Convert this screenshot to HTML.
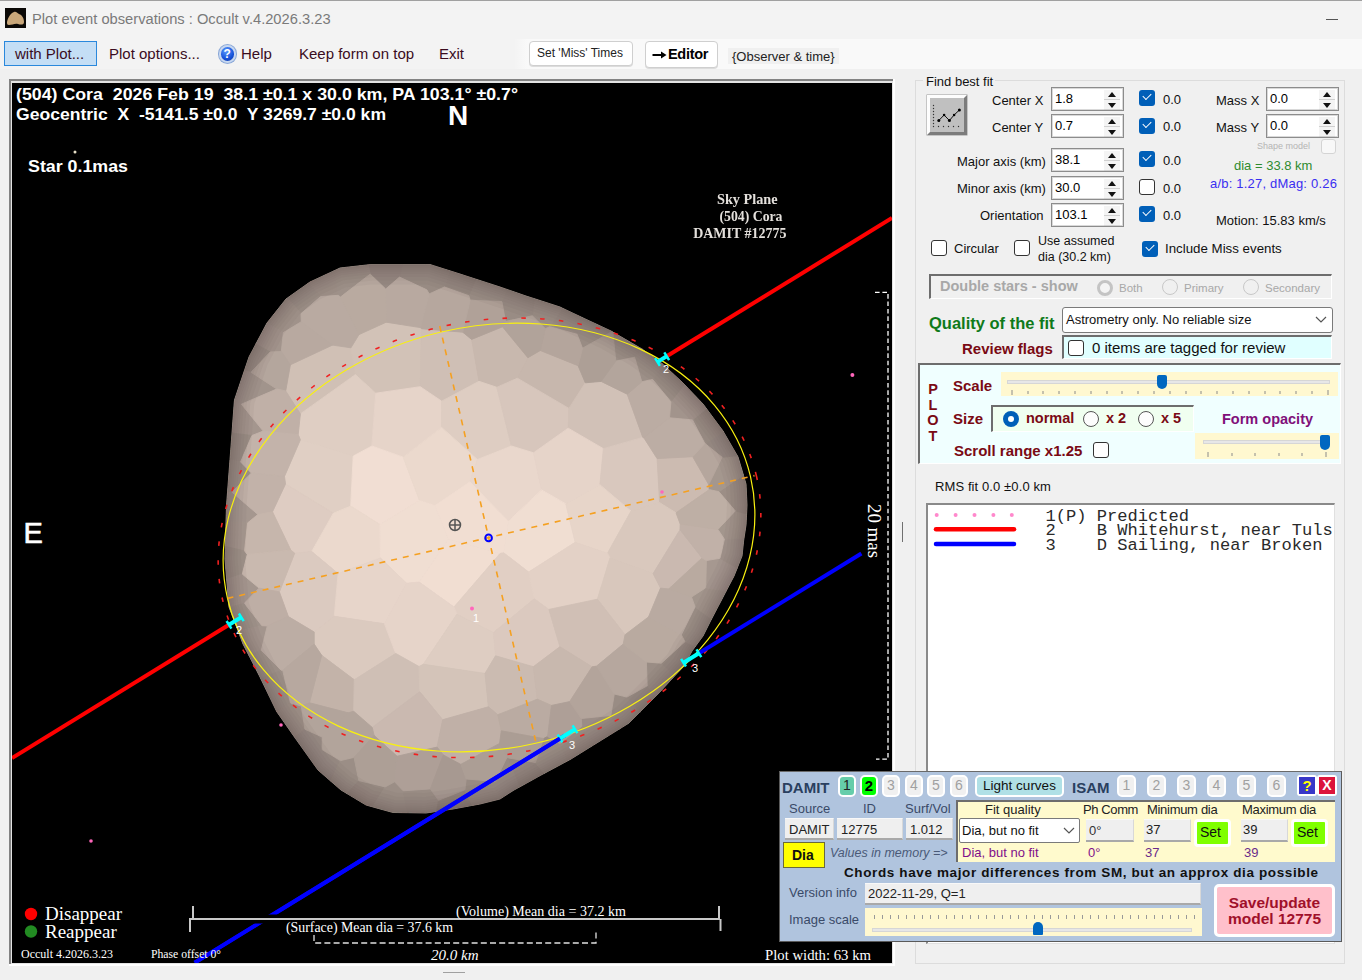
<!DOCTYPE html>
<html><head><meta charset="utf-8">
<style>
*{margin:0;padding:0;box-sizing:border-box}
html,body{width:1362px;height:980px;overflow:hidden;background:#f0f0f0;font-family:"Liberation Sans",sans-serif;color:#000;position:relative}
.a{position:absolute;white-space:nowrap}
#title{position:absolute;left:0;top:0;width:1362px;height:39px;background:#f3f3f3;border-top:1px solid #a0a0a0}
#menu{position:absolute;left:0;top:39px;width:1362px;height:30px;background:linear-gradient(90deg,#f3f3f3 0,#f3f3f3 514px,#f9f9f9 527px,#f9f9f9 100%)}
.mi{position:absolute;top:46px;font-size:15px;color:#3a0c1e;line-height:16px}
.t13{font-size:13px;line-height:15px}
</style></head><body>
<div id="title"></div>
<svg width="21" height="20" style="position:absolute;left:5px;top:8px"><rect width="21" height="20" fill="#0a0806"/><path d="M2 14 C3 9 6 5 9 4 C11 3 12 5 14 6 C17 7 19 10 19 14 C19 17 16 17 13 16 C10 15 7 17 4 17 C2 17 2 16 2 14Z" fill="#c9a77a"/></svg>
<div class="a" style="left:32px;top:10px;font-size:14.7px;color:#7a7a7a;line-height:18px">Plot event observations : Occult v.4.2026.3.23</div>
<div class="a" style="left:1326px;top:19px;width:12px;height:1px;background:#555"></div>
<div id="menu"></div>
<div class="a" style="left:4px;top:41px;width:93px;height:25px;background:#c4def5;border:1px solid #2a88dc"></div>
<div class="mi" style="left:15px">with Plot...</div>
<div class="mi" style="left:109px">Plot options...</div>
<div class="mi" style="left:241px">Help</div>
<div class="mi" style="left:299px">Keep form on top</div>
<div class="mi" style="left:439px">Exit</div>
<svg width="1362" height="980" viewBox="0 0 1362 980" style="position:absolute;left:0;top:0">
<defs><clipPath id="pc"><rect x="12" y="83" width="880" height="880"/></clipPath></defs>
<rect x="9" y="79" width="886" height="887" fill="#ffffff"/>
<rect x="9" y="79" width="884" height="885" fill="#828282"/>
<rect x="11" y="81" width="882" height="883" fill="#e3e3e3"/>
<rect x="12" y="83" width="880" height="880" fill="#000"/>
<g clip-path="url(#pc)">
<polygon points="340.0,268.0 371.0,264.5 430.0,264.5 460.0,274.0 500.0,287.0 526.0,296.0 560.0,307.0 580.0,316.5 611.0,331.0 642.0,349.0 662.0,363.5 682.0,382.0 703.0,404.0 723.0,431.0 738.0,457.0 746.0,484.0 747.0,505.0 746.0,525.0 743.7,540.0 742.0,556.0 734.0,576.0 722.0,599.0 711.0,620.0 703.0,636.0 692.0,651.0 684.0,666.0 670.0,681.0 658.0,694.0 629.0,723.0 600.0,741.0 571.0,759.0 543.0,774.0 514.0,790.0 500.0,799.0 480.0,804.0 453.0,809.0 426.0,813.0 393.0,812.5 366.0,805.0 341.0,790.0 318.0,770.0 298.0,742.0 277.0,712.0 260.0,677.0 243.0,644.0 234.0,620.0 229.0,607.0 225.0,559.0 226.5,506.0 230.5,453.0 234.5,400.0 249.0,357.0 267.0,323.0 286.0,299.0 310.0,282.0" fill="#b4a69c"/>
<polygon points="285.7,390.9 300.4,413.9 355.4,374.6 350.9,347.8 332.5,345.1 290.4,364.8" fill="#d0c0b5" stroke="#d0c0b5" stroke-width="0.9" stroke-linejoin="round"/>
<polygon points="386.2,322.2 359.0,334.6 350.9,347.8 355.4,374.6 375.8,393.2 420.2,386.7 421.4,328.7 420.3,327.6" fill="#d2c2b7" stroke="#d2c2b7" stroke-width="0.9" stroke-linejoin="round"/>
<polygon points="471.6,339.4 462.8,332.2 421.4,328.7 420.2,386.7 441.7,401.2 479.0,381.3" fill="#cfbfb5" stroke="#cfbfb5" stroke-width="0.9" stroke-linejoin="round"/>
<polygon points="502.5,326.8 471.6,339.4 479.0,381.3 496.8,387.3 517.4,378.2 527.9,357.7" fill="#c8b8ae" stroke="#c8b8ae" stroke-width="0.9" stroke-linejoin="round"/>
<polygon points="517.4,378.2 568.9,408.4 585.3,382.8 578.1,365.7 540.3,350.5 527.9,357.7" fill="#c7b7ad" stroke="#c7b7ad" stroke-width="0.9" stroke-linejoin="round"/>
<polygon points="300.4,413.9 298.2,434.6 300.4,439.8 353.2,456.1 371.9,446.0 375.8,393.2 355.4,374.6" fill="#dfcec3" stroke="#dfcec3" stroke-width="0.9" stroke-linejoin="round"/>
<polygon points="403.2,457.2 441.6,427.4 441.7,401.2 420.2,386.7 375.8,393.2 371.9,446.0" fill="#e6d4c9" stroke="#e6d4c9" stroke-width="0.9" stroke-linejoin="round"/>
<polygon points="496.8,387.3 479.0,381.3 441.7,401.2 441.6,427.4 477.4,459.5 511.4,446.0" fill="#decdc2" stroke="#decdc2" stroke-width="0.9" stroke-linejoin="round"/>
<polygon points="496.8,387.3 511.4,446.0 533.5,452.8 568.2,428.2 568.9,408.4 517.4,378.2" fill="#d7c6bc" stroke="#d7c6bc" stroke-width="0.9" stroke-linejoin="round"/>
<polygon points="601.1,381.4 585.3,382.8 568.9,408.4 568.2,428.2 603.4,448.7 642.8,437.4 627.2,394.2" fill="#d1c1b7" stroke="#d1c1b7" stroke-width="0.9" stroke-linejoin="round"/>
<polygon points="333.4,513.2 350.7,506.1 353.2,456.1 300.4,439.8 284.5,476.4 285.5,484.0" fill="#e0cfc4" stroke="#e0cfc4" stroke-width="0.9" stroke-linejoin="round"/>
<polygon points="403.2,457.2 371.9,446.0 353.2,456.1 350.7,506.1 380.0,524.5 419.5,500.6" fill="#f1ded3" stroke="#f1ded3" stroke-width="0.9" stroke-linejoin="round"/>
<polygon points="441.6,427.4 403.2,457.2 419.5,500.6 434.8,505.6 469.8,481.8 477.4,459.5" fill="#ebd9cd" stroke="#ebd9cd" stroke-width="0.9" stroke-linejoin="round"/>
<polygon points="511.4,446.0 477.4,459.5 469.8,481.8 508.5,521.1 541.5,489.9 533.5,452.8" fill="#e9d7cc" stroke="#e9d7cc" stroke-width="0.9" stroke-linejoin="round"/>
<polygon points="541.5,489.9 565.8,503.9 599.9,484.7 603.4,448.7 568.2,428.2 533.5,452.8" fill="#e6d4c9" stroke="#e6d4c9" stroke-width="0.9" stroke-linejoin="round"/>
<polygon points="643.8,437.7 642.8,437.4 603.4,448.7 599.9,484.7 631.0,511.1 659.6,502.6 657.1,458.6" fill="#d9c8be" stroke="#d9c8be" stroke-width="0.9" stroke-linejoin="round"/>
<polygon points="708.7,484.6 692.7,456.7 657.1,458.6 659.6,502.6 676.0,512.8 709.3,489.6" fill="#ccbbb1" stroke="#ccbbb1" stroke-width="0.9" stroke-linejoin="round"/>
<polygon points="290.8,550.0 294.7,553.2 311.7,551.5 333.4,513.2 285.5,484.0 272.5,511.8" fill="#deccc2" stroke="#deccc2" stroke-width="0.9" stroke-linejoin="round"/>
<polygon points="380.5,557.9 380.0,524.5 350.7,506.1 333.4,513.2 311.7,551.5 338.1,573.5" fill="#ebd9cd" stroke="#ebd9cd" stroke-width="0.9" stroke-linejoin="round"/>
<polygon points="419.2,582.1 448.4,538.9 434.8,505.6 419.5,500.6 380.0,524.5 380.5,557.9 406.5,583.3" fill="#f0ded2" stroke="#f0ded2" stroke-width="0.9" stroke-linejoin="round"/>
<polygon points="508.5,521.1 469.8,481.8 434.8,505.6 448.4,538.9 500.1,553.4 503.7,552.8" fill="#f1ded2" stroke="#f1ded2" stroke-width="0.9" stroke-linejoin="round"/>
<polygon points="528.6,572.0 575.2,542.3 565.8,503.9 541.5,489.9 508.5,521.1 503.7,552.8" fill="#f0ded2" stroke="#f0ded2" stroke-width="0.9" stroke-linejoin="round"/>
<polygon points="607.5,553.2 631.0,511.1 599.9,484.7 565.8,503.9 575.2,542.3" fill="#e7d5c9" stroke="#e7d5c9" stroke-width="0.9" stroke-linejoin="round"/>
<polygon points="659.6,502.6 631.0,511.1 607.5,553.2 610.0,558.0 653.1,573.6 680.0,529.7 680.2,524.1 676.0,512.8" fill="#d9c8bd" stroke="#d9c8bd" stroke-width="0.9" stroke-linejoin="round"/>
<polygon points="288.4,616.6 314.2,632.0 334.3,616.3 338.1,573.5 311.7,551.5 294.7,553.2 279.4,591.9" fill="#dbcac0" stroke="#dbcac0" stroke-width="0.9" stroke-linejoin="round"/>
<polygon points="384.5,623.8 406.5,583.3 380.5,557.9 338.1,573.5 334.3,616.3" fill="#e7d5ca" stroke="#e7d5ca" stroke-width="0.9" stroke-linejoin="round"/>
<polygon points="448.4,538.9 419.2,582.1 454.0,607.0 500.1,553.4" fill="#f1ded2" stroke="#f1ded2" stroke-width="0.9" stroke-linejoin="round"/>
<polygon points="528.6,572.0 503.7,552.8 500.1,553.4 454.0,607.0 456.9,614.2 493.4,632.6 534.3,598.8" fill="#e1cfc4" stroke="#e1cfc4" stroke-width="0.9" stroke-linejoin="round"/>
<polygon points="597.4,599.2 610.0,558.0 607.5,553.2 575.2,542.3 528.6,572.0 534.3,598.8 548.9,609.4" fill="#e3d1c6" stroke="#e3d1c6" stroke-width="0.9" stroke-linejoin="round"/>
<polygon points="653.1,573.6 610.0,558.0 597.4,599.2 625.1,634.7 648.5,616.9 660.5,588.1" fill="#d8c7bc" stroke="#d8c7bc" stroke-width="0.9" stroke-linejoin="round"/>
<polygon points="680.0,529.7 653.1,573.6 660.5,588.1 668.7,589.0 702.1,557.9" fill="#cab9b0" stroke="#cab9b0" stroke-width="0.9" stroke-linejoin="round"/>
<polygon points="354.3,679.8 395.7,653.4 384.5,623.8 334.3,616.3 314.2,632.0 314.2,644.1 321.7,655.3" fill="#dbcabf" stroke="#dbcabf" stroke-width="0.9" stroke-linejoin="round"/>
<polygon points="456.9,614.2 454.0,607.0 419.2,582.1 406.5,583.3 384.5,623.8 395.7,653.4 419.0,666.5 423.3,664.3" fill="#e6d4c9" stroke="#e6d4c9" stroke-width="0.9" stroke-linejoin="round"/>
<polygon points="456.9,614.2 423.3,664.3 485.0,673.4 495.5,655.8 493.4,632.6" fill="#decdc2" stroke="#decdc2" stroke-width="0.9" stroke-linejoin="round"/>
<polygon points="534.3,598.8 493.4,632.6 495.5,655.8 533.3,666.7 559.9,646.7 548.9,609.4" fill="#dbc9bf" stroke="#dbc9bf" stroke-width="0.9" stroke-linejoin="round"/>
<polygon points="625.1,634.7 597.4,599.2 548.9,609.4 559.9,646.7 592.1,666.8 596.6,666.1 623.2,644.1" fill="#d0bfb5" stroke="#d0bfb5" stroke-width="0.9" stroke-linejoin="round"/>
<polygon points="353.7,711.3 354.3,679.8 321.7,655.3 309.5,702.8 348.1,712.8" fill="#c3b3a9" stroke="#c3b3a9" stroke-width="0.9" stroke-linejoin="round"/>
<polygon points="419.8,691.7 419.0,666.5 395.7,653.4 354.3,679.8 353.7,711.3 372.2,727.4" fill="#cfbfb5" stroke="#cfbfb5" stroke-width="0.9" stroke-linejoin="round"/>
<polygon points="488.4,706.8 485.0,673.4 423.3,664.3 419.0,666.5 419.8,691.7 442.7,719.7" fill="#d4c4b9" stroke="#d4c4b9" stroke-width="0.9" stroke-linejoin="round"/>
<polygon points="495.5,655.8 485.0,673.4 488.4,706.8 497.8,714.7 537.3,699.2 533.3,666.7" fill="#cbbbb1" stroke="#cbbbb1" stroke-width="0.9" stroke-linejoin="round"/>
<polygon points="559.9,646.7 533.3,666.7 537.3,699.2 551.5,705.4 569.7,701.6 592.1,666.8" fill="#c8b8ae" stroke="#c8b8ae" stroke-width="0.9" stroke-linejoin="round"/>
<polygon points="397.1,756.2 437.1,747.1 442.7,719.7 419.8,691.7 372.2,727.4 374.1,735.4" fill="#cab9b0" stroke="#cab9b0" stroke-width="0.9" stroke-linejoin="round"/>
<polygon points="497.8,714.7 488.4,706.8 442.7,719.7 437.1,747.1 443.3,755.0 460.8,764.4 499.6,743.4 501.3,730.8" fill="#c0b0a7" stroke="#c0b0a7" stroke-width="0.9" stroke-linejoin="round"/>
<polygon points="537.3,699.2 497.8,714.7 501.3,730.8 543.5,738.6 547.6,736.4 551.5,705.4" fill="#baaba2" stroke="#baaba2" stroke-width="0.9" stroke-linejoin="round"/>
<polygon points="320.6,296.6 338.3,295.3 334.3,270.7 310.0,282.0 308.0,283.4" fill="#9e9088" stroke="#9e9088" stroke-width="0.9" stroke-linejoin="round"/>
<polygon points="301.0,313.6 320.6,296.6 308.0,283.4 287.4,298.0" fill="#9c8f87" stroke="#9c8f87" stroke-width="0.9" stroke-linejoin="round"/>
<polygon points="301.3,321.7 301.0,313.6 287.4,298.0 286.0,299.0 267.0,323.0 267.0,323.0 283.4,332.6" fill="#a0928a" stroke="#a0928a" stroke-width="0.9" stroke-linejoin="round"/>
<polygon points="283.4,332.6 267.0,323.0 255.8,344.2 270.2,351.9 281.3,351.6" fill="#a2948c" stroke="#a2948c" stroke-width="0.9" stroke-linejoin="round"/>
<polygon points="255.8,344.2 249.0,357.0 244.3,370.9 251.0,372.2 270.2,351.9" fill="#998c84" stroke="#998c84" stroke-width="0.9" stroke-linejoin="round"/>
<polygon points="244.3,370.9 234.5,400.0 234.3,402.0 241.4,404.2 276.7,389.0 251.0,372.2" fill="#a1948c" stroke="#a1948c" stroke-width="0.9" stroke-linejoin="round"/>
<polygon points="241.4,404.2 234.3,402.0 232.0,433.0 251.9,435.5 263.2,431.1" fill="#a4968e" stroke="#a4968e" stroke-width="0.9" stroke-linejoin="round"/>
<polygon points="232.0,433.0 230.5,453.0 230.0,459.6 240.6,461.9 251.9,435.5" fill="#9b8e86" stroke="#9b8e86" stroke-width="0.9" stroke-linejoin="round"/>
<polygon points="251.4,473.1 240.6,461.9 230.0,459.6 227.5,492.5 231.9,492.1" fill="#9d9088" stroke="#9d9088" stroke-width="0.9" stroke-linejoin="round"/>
<polygon points="231.9,492.1 227.5,492.5 226.5,506.0 226.0,522.1 247.7,522.8 257.9,514.5" fill="#a5978f" stroke="#a5978f" stroke-width="0.9" stroke-linejoin="round"/>
<polygon points="247.7,522.8 226.0,522.1 225.4,546.4 244.5,550.8" fill="#a6988f" stroke="#a6988f" stroke-width="0.9" stroke-linejoin="round"/>
<polygon points="244.5,550.8 225.4,546.4 225.0,559.0 226.7,579.5 242.3,574.1 247.3,554.5" fill="#9e9189" stroke="#9e9189" stroke-width="0.9" stroke-linejoin="round"/>
<polygon points="244.4,603.2 259.1,588.1 242.3,574.1 226.7,579.5 229.0,607.0 229.2,607.6" fill="#a4968e" stroke="#a4968e" stroke-width="0.9" stroke-linejoin="round"/>
<polygon points="261.9,625.7 244.4,603.2 229.2,607.6 234.0,620.0 238.1,631.0" fill="#9f928a" stroke="#9f928a" stroke-width="0.9" stroke-linejoin="round"/>
<polygon points="261.3,650.3 267.3,625.9 261.9,625.7 238.1,631.0 243.0,644.0 248.8,655.2" fill="#a3958d" stroke="#a3958d" stroke-width="0.9" stroke-linejoin="round"/>
<polygon points="248.8,655.2 260.0,677.0 260.7,678.5 281.3,670.3 261.3,650.3" fill="#9f928a" stroke="#9f928a" stroke-width="0.9" stroke-linejoin="round"/>
<polygon points="282.7,670.3 281.3,670.3 260.7,678.5 276.6,711.3 290.5,703.0" fill="#9c8f87" stroke="#9c8f87" stroke-width="0.9" stroke-linejoin="round"/>
<polygon points="301.3,706.0 290.5,703.0 276.6,711.3 277.0,712.0 294.8,737.5 304.9,729.2" fill="#9d8f87" stroke="#9d8f87" stroke-width="0.9" stroke-linejoin="round"/>
<polygon points="304.9,729.2 294.8,737.5 298.0,742.0 310.2,759.1 322.2,749.7 322.3,737.1" fill="#988b84" stroke="#988b84" stroke-width="0.9" stroke-linejoin="round"/>
<polygon points="322.2,749.7 310.2,759.1 318.0,770.0 330.7,781.1 340.5,760.6" fill="#988b84" stroke="#988b84" stroke-width="0.9" stroke-linejoin="round"/>
<polygon points="330.7,781.1 341.0,790.0 347.2,793.7 358.8,780.6 354.0,757.4 340.5,760.6" fill="#9b8e86" stroke="#9b8e86" stroke-width="0.9" stroke-linejoin="round"/>
<polygon points="347.2,793.7 366.0,805.0 372.7,806.9 385.2,786.9 358.8,780.6" fill="#968981" stroke="#968981" stroke-width="0.9" stroke-linejoin="round"/>
<polygon points="385.2,786.9 372.7,806.9 393.0,812.5 407.6,812.7 403.2,790.8 394.6,781.8" fill="#9b8e86" stroke="#9b8e86" stroke-width="0.9" stroke-linejoin="round"/>
<polygon points="430.4,788.9 403.2,790.8 407.6,812.7 426.0,813.0 436.7,811.4 438.5,800.3" fill="#998c84" stroke="#998c84" stroke-width="0.9" stroke-linejoin="round"/>
<polygon points="436.7,811.4 453.0,809.0 472.3,805.4 464.9,789.8 438.5,800.3" fill="#91857d" stroke="#91857d" stroke-width="0.9" stroke-linejoin="round"/>
<polygon points="472.3,805.4 480.0,804.0 500.0,799.0 502.0,797.7 495.2,781.4 466.2,779.0 464.9,789.8" fill="#988b83" stroke="#988b83" stroke-width="0.9" stroke-linejoin="round"/>
<polygon points="507.1,757.1 495.2,781.4 502.0,797.7 514.0,790.0 520.1,786.7 508.7,758.0" fill="#988b84" stroke="#988b84" stroke-width="0.9" stroke-linejoin="round"/>
<polygon points="520.1,786.7 543.0,774.0 544.2,773.4 535.4,762.6 508.7,758.0" fill="#958880" stroke="#958880" stroke-width="0.9" stroke-linejoin="round"/>
<polygon points="547.6,736.4 543.5,738.6 535.4,762.6 544.2,773.4 567.9,760.7 559.9,743.6" fill="#9b8e86" stroke="#9b8e86" stroke-width="0.9" stroke-linejoin="round"/>
<polygon points="559.9,743.6 567.9,760.7 571.0,759.0 593.7,744.9 581.8,726.3" fill="#9a8d85" stroke="#9a8d85" stroke-width="0.9" stroke-linejoin="round"/>
<polygon points="581.8,726.3 593.7,744.9 600.0,741.0 618.9,729.3 610.8,715.5 581.3,718.5" fill="#9b8d86" stroke="#9b8d86" stroke-width="0.9" stroke-linejoin="round"/>
<polygon points="610.8,715.5 618.9,729.3 629.0,723.0 639.7,712.3 626.9,697.1 614.3,694.0" fill="#998c84" stroke="#998c84" stroke-width="0.9" stroke-linejoin="round"/>
<polygon points="626.9,697.1 639.7,712.3 655.4,696.6 647.2,685.8" fill="#978a82" stroke="#978a82" stroke-width="0.9" stroke-linejoin="round"/>
<polygon points="655.4,696.6 658.0,694.0 670.0,681.0 674.8,675.8 661.3,663.2 646.4,662.0 647.2,685.8" fill="#9a8d85" stroke="#9a8d85" stroke-width="0.9" stroke-linejoin="round"/>
<polygon points="661.3,663.2 674.8,675.8 684.0,666.0 692.0,651.0 695.5,646.2 685.0,641.6" fill="#978a82" stroke="#978a82" stroke-width="0.9" stroke-linejoin="round"/>
<polygon points="685.0,641.6 695.5,646.2 703.0,636.0 711.0,620.0 711.5,619.1 695.1,606.9 681.3,634.9" fill="#9c8f87" stroke="#9c8f87" stroke-width="0.9" stroke-linejoin="round"/>
<polygon points="691.5,597.0 695.1,606.9 711.5,619.1 722.0,599.0 726.1,591.1 705.7,587.8" fill="#a2958c" stroke="#a2958c" stroke-width="0.9" stroke-linejoin="round"/>
<polygon points="720.0,558.3 706.4,560.5 705.7,587.8 726.1,591.1 734.0,576.0 737.2,568.0" fill="#a69890" stroke="#a69890" stroke-width="0.9" stroke-linejoin="round"/>
<polygon points="720.0,558.3 737.2,568.0 742.0,556.0 743.7,540.0 744.0,538.1 724.4,539.2" fill="#a0938b" stroke="#a0938b" stroke-width="0.9" stroke-linejoin="round"/>
<polygon points="744.0,538.1 746.0,525.0 746.6,513.9 735.3,510.9 717.9,529.4 724.4,539.2" fill="#a3968d" stroke="#a3968d" stroke-width="0.9" stroke-linejoin="round"/>
<polygon points="746.6,513.9 747.0,505.0 746.0,484.0 743.4,475.1 718.9,491.7 735.3,510.9" fill="#9c8e86" stroke="#9c8e86" stroke-width="0.9" stroke-linejoin="round"/>
<polygon points="722.1,457.3 708.7,484.6 709.3,489.6 718.9,491.7 743.4,475.1 738.0,457.0 737.3,455.7" fill="#a4978e" stroke="#a4978e" stroke-width="0.9" stroke-linejoin="round"/>
<polygon points="705.0,443.5 722.1,457.3 737.3,455.7 723.6,432.1" fill="#988b84" stroke="#988b84" stroke-width="0.9" stroke-linejoin="round"/>
<polygon points="692.5,419.9 704.8,443.5 705.0,443.5 723.6,432.1 723.0,431.0 706.4,408.6" fill="#9a8d85" stroke="#9a8d85" stroke-width="0.9" stroke-linejoin="round"/>
<polygon points="670.9,401.8 669.5,417.8 692.5,419.9 706.4,408.6 703.0,404.0 684.3,384.4" fill="#a2948c" stroke="#a2948c" stroke-width="0.9" stroke-linejoin="round"/>
<polygon points="670.9,401.8 684.3,384.4 682.0,382.0 663.5,364.9 652.6,379.4" fill="#9b8e86" stroke="#9b8e86" stroke-width="0.9" stroke-linejoin="round"/>
<polygon points="634.6,357.3 641.8,381.8 652.6,379.4 663.5,364.9 662.0,363.5 642.0,349.0 641.7,348.8" fill="#9c8f87" stroke="#9c8f87" stroke-width="0.9" stroke-linejoin="round"/>
<polygon points="615.8,361.1 634.6,357.3 641.7,348.8 612.8,332.1" fill="#9b8e86" stroke="#9b8e86" stroke-width="0.9" stroke-linejoin="round"/>
<polygon points="577.1,334.3 582.5,348.2 612.1,331.6 611.0,331.0 582.1,317.5" fill="#998c84" stroke="#998c84" stroke-width="0.9" stroke-linejoin="round"/>
<polygon points="549.7,326.7 577.1,334.3 582.1,317.5 580.0,316.5 562.4,308.2" fill="#998c84" stroke="#998c84" stroke-width="0.9" stroke-linejoin="round"/>
<polygon points="532.3,315.8 545.4,328.7 549.7,326.7 562.4,308.2 560.0,307.0 534.4,298.7" fill="#9c8f87" stroke="#9c8f87" stroke-width="0.9" stroke-linejoin="round"/>
<polygon points="532.3,315.8 534.4,298.7 526.0,296.0 506.9,289.4 501.9,301.6 505.5,321.3" fill="#998c84" stroke="#998c84" stroke-width="0.9" stroke-linejoin="round"/>
<polygon points="468.8,295.7 470.1,300.2 501.9,301.6 506.9,289.4 500.0,287.0 475.9,279.2" fill="#9b8e86" stroke="#9b8e86" stroke-width="0.9" stroke-linejoin="round"/>
<polygon points="444.4,287.0 468.8,295.7 475.9,279.2 460.0,274.0 449.5,270.7" fill="#978a82" stroke="#978a82" stroke-width="0.9" stroke-linejoin="round"/>
<polygon points="426.8,289.8 429.2,293.9 444.4,287.0 449.5,270.7 430.0,264.5 425.1,264.5" fill="#988b83" stroke="#988b83" stroke-width="0.9" stroke-linejoin="round"/>
<polygon points="399.5,277.1 426.8,289.8 425.1,264.5 402.1,264.5" fill="#988b83" stroke="#988b83" stroke-width="0.9" stroke-linejoin="round"/>
<polygon points="370.2,274.1 385.7,289.0 399.5,277.1 402.1,264.5 371.0,264.5 368.4,264.8" fill="#968982" stroke="#968982" stroke-width="0.9" stroke-linejoin="round"/>
<polygon points="368.4,264.8 340.0,268.0 334.3,270.7 338.3,295.3 340.4,297.1 370.2,274.1" fill="#9e9189" stroke="#9e9189" stroke-width="0.9" stroke-linejoin="round"/>
<polygon points="350.9,347.8 359.0,334.6 340.4,297.1 338.3,295.3 320.6,296.6 301.0,313.6 301.3,321.7 332.5,345.1" fill="#b9aaa1" stroke="#b9aaa1" stroke-width="0.9" stroke-linejoin="round"/>
<polygon points="332.5,345.1 301.3,321.7 283.4,332.6 281.3,351.6 290.4,364.8" fill="#b8a9a0" stroke="#b8a9a0" stroke-width="0.9" stroke-linejoin="round"/>
<polygon points="281.3,351.6 270.2,351.9 251.0,372.2 276.7,389.0 285.7,390.9 290.4,364.8" fill="#b4a69d" stroke="#b4a69d" stroke-width="0.9" stroke-linejoin="round"/>
<polygon points="276.7,389.0 241.4,404.2 263.2,431.1 298.2,434.6 300.4,413.9 285.7,390.9" fill="#c0b0a7" stroke="#c0b0a7" stroke-width="0.9" stroke-linejoin="round"/>
<polygon points="284.5,476.4 300.4,439.8 298.2,434.6 263.2,431.1 251.9,435.5 240.6,461.9 251.4,473.1" fill="#c3b3aa" stroke="#c3b3aa" stroke-width="0.9" stroke-linejoin="round"/>
<polygon points="272.5,511.8 285.5,484.0 284.5,476.4 251.4,473.1 231.9,492.1 257.9,514.5" fill="#c2b2a9" stroke="#c2b2a9" stroke-width="0.9" stroke-linejoin="round"/>
<polygon points="247.7,522.8 244.5,550.8 247.3,554.5 290.8,550.0 272.5,511.8 257.9,514.5" fill="#c6b6ac" stroke="#c6b6ac" stroke-width="0.9" stroke-linejoin="round"/>
<polygon points="242.3,574.1 259.1,588.1 279.4,591.9 294.7,553.2 290.8,550.0 247.3,554.5" fill="#c9b9af" stroke="#c9b9af" stroke-width="0.9" stroke-linejoin="round"/>
<polygon points="267.3,625.9 288.4,616.6 279.4,591.9 259.1,588.1 244.4,603.2 261.9,625.7" fill="#beaea5" stroke="#beaea5" stroke-width="0.9" stroke-linejoin="round"/>
<polygon points="314.2,632.0 288.4,616.6 267.3,625.9 261.3,650.3 281.3,670.3 282.7,670.3 314.2,644.1" fill="#bcada4" stroke="#bcada4" stroke-width="0.9" stroke-linejoin="round"/>
<polygon points="309.5,702.8 321.7,655.3 314.2,644.1 282.7,670.3 290.5,703.0 301.3,706.0" fill="#b7a89f" stroke="#b7a89f" stroke-width="0.9" stroke-linejoin="round"/>
<polygon points="348.1,712.8 309.5,702.8 301.3,706.0 304.9,729.2 322.3,737.1" fill="#b2a49b" stroke="#b2a49b" stroke-width="0.9" stroke-linejoin="round"/>
<polygon points="354.0,757.4 374.1,735.4 372.2,727.4 353.7,711.3 348.1,712.8 322.3,737.1 322.2,749.7 340.5,760.6" fill="#b2a49b" stroke="#b2a49b" stroke-width="0.9" stroke-linejoin="round"/>
<polygon points="358.8,780.6 385.2,786.9 394.6,781.8 397.1,756.2 374.1,735.4 354.0,757.4" fill="#ad9f96" stroke="#ad9f96" stroke-width="0.9" stroke-linejoin="round"/>
<polygon points="394.6,781.8 403.2,790.8 430.4,788.9 443.3,755.0 437.1,747.1 397.1,756.2" fill="#ae9f97" stroke="#ae9f97" stroke-width="0.9" stroke-linejoin="round"/>
<polygon points="464.9,789.8 466.2,779.0 460.8,764.4 443.3,755.0 430.4,788.9 438.5,800.3" fill="#a79991" stroke="#a79991" stroke-width="0.9" stroke-linejoin="round"/>
<polygon points="499.6,743.4 460.8,764.4 466.2,779.0 495.2,781.4 507.1,757.1" fill="#ac9e95" stroke="#ac9e95" stroke-width="0.9" stroke-linejoin="round"/>
<polygon points="535.4,762.6 543.5,738.6 501.3,730.8 499.6,743.4 507.1,757.1 508.7,758.0" fill="#ab9d94" stroke="#ab9d94" stroke-width="0.9" stroke-linejoin="round"/>
<polygon points="569.7,701.6 551.5,705.4 547.6,736.4 559.9,743.6 581.8,726.3 581.3,718.5" fill="#ae9f97" stroke="#ae9f97" stroke-width="0.9" stroke-linejoin="round"/>
<polygon points="592.1,666.8 569.7,701.6 581.3,718.5 610.8,715.5 614.3,694.0 596.6,666.1" fill="#b3a49b" stroke="#b3a49b" stroke-width="0.9" stroke-linejoin="round"/>
<polygon points="646.4,662.0 623.2,644.1 596.6,666.1 614.3,694.0 626.9,697.1 647.2,685.8" fill="#b6a79e" stroke="#b6a79e" stroke-width="0.9" stroke-linejoin="round"/>
<polygon points="661.3,663.2 685.0,641.6 681.3,634.9 648.5,616.9 625.1,634.7 623.2,644.1 646.4,662.0" fill="#b9aaa0" stroke="#b9aaa0" stroke-width="0.9" stroke-linejoin="round"/>
<polygon points="660.5,588.1 648.5,616.9 681.3,634.9 695.1,606.9 691.5,597.0 668.7,589.0" fill="#b9aaa1" stroke="#b9aaa1" stroke-width="0.9" stroke-linejoin="round"/>
<polygon points="668.7,589.0 691.5,597.0 705.7,587.8 706.4,560.5 702.1,557.9" fill="#b9aaa0" stroke="#b9aaa0" stroke-width="0.9" stroke-linejoin="round"/>
<polygon points="717.9,529.4 680.2,524.1 680.0,529.7 702.1,557.9 706.4,560.5 720.0,558.3 724.4,539.2" fill="#c1b1a8" stroke="#c1b1a8" stroke-width="0.9" stroke-linejoin="round"/>
<polygon points="735.3,510.9 718.9,491.7 709.3,489.6 676.0,512.8 680.2,524.1 717.9,529.4" fill="#beafa5" stroke="#beafa5" stroke-width="0.9" stroke-linejoin="round"/>
<polygon points="704.8,443.5 692.7,456.7 708.7,484.6 722.1,457.3 705.0,443.5" fill="#b5a69d" stroke="#b5a69d" stroke-width="0.9" stroke-linejoin="round"/>
<polygon points="692.5,419.9 669.5,417.8 643.8,437.7 657.1,458.6 692.7,456.7 704.8,443.5" fill="#bcada4" stroke="#bcada4" stroke-width="0.9" stroke-linejoin="round"/>
<polygon points="627.2,394.2 642.8,437.4 643.8,437.7 669.5,417.8 670.9,401.8 652.6,379.4 641.8,381.8" fill="#bbaca3" stroke="#bbaca3" stroke-width="0.9" stroke-linejoin="round"/>
<polygon points="601.1,381.4 627.2,394.2 641.8,381.8 634.6,357.3 615.8,361.1" fill="#b3a59c" stroke="#b3a59c" stroke-width="0.9" stroke-linejoin="round"/>
<polygon points="612.8,332.1 612.1,331.6 582.5,348.2 578.1,365.7 585.3,382.8 601.1,381.4 615.8,361.1" fill="#ad9f96" stroke="#ad9f96" stroke-width="0.9" stroke-linejoin="round"/>
<polygon points="578.1,365.7 582.5,348.2 577.1,334.3 549.7,326.7 545.4,328.7 540.3,350.5" fill="#b4a59c" stroke="#b4a59c" stroke-width="0.9" stroke-linejoin="round"/>
<polygon points="540.3,350.5 545.4,328.7 532.3,315.8 505.5,321.3 502.5,326.8 527.9,357.7" fill="#b1a39a" stroke="#b1a39a" stroke-width="0.9" stroke-linejoin="round"/>
<polygon points="505.5,321.3 501.9,301.6 470.1,300.2 462.8,332.2 471.6,339.4 502.5,326.8" fill="#b0a198" stroke="#b0a198" stroke-width="0.9" stroke-linejoin="round"/>
<polygon points="429.2,293.9 420.3,327.6 421.4,328.7 462.8,332.2 470.1,300.2 468.8,295.7 444.4,287.0" fill="#b6a79e" stroke="#b6a79e" stroke-width="0.9" stroke-linejoin="round"/>
<polygon points="399.5,277.1 385.7,289.0 386.2,322.2 420.3,327.6 429.2,293.9 426.8,289.8" fill="#b8a9a0" stroke="#b8a9a0" stroke-width="0.9" stroke-linejoin="round"/>
<polygon points="340.4,297.1 359.0,334.6 386.2,322.2 385.7,289.0 370.2,274.1" fill="#b9aaa0" stroke="#b9aaa0" stroke-width="0.9" stroke-linejoin="round"/>
<clipPath id="astc"><polygon points="340.0,268.0 371.0,264.5 430.0,264.5 460.0,274.0 500.0,287.0 526.0,296.0 560.0,307.0 580.0,316.5 611.0,331.0 642.0,349.0 662.0,363.5 682.0,382.0 703.0,404.0 723.0,431.0 738.0,457.0 746.0,484.0 747.0,505.0 746.0,525.0 743.7,540.0 742.0,556.0 734.0,576.0 722.0,599.0 711.0,620.0 703.0,636.0 692.0,651.0 684.0,666.0 670.0,681.0 658.0,694.0 629.0,723.0 600.0,741.0 571.0,759.0 543.0,774.0 514.0,790.0 500.0,799.0 480.0,804.0 453.0,809.0 426.0,813.0 393.0,812.5 366.0,805.0 341.0,790.0 318.0,770.0 298.0,742.0 277.0,712.0 260.0,677.0 243.0,644.0 234.0,620.0 229.0,607.0 225.0,559.0 226.5,506.0 230.5,453.0 234.5,400.0 249.0,357.0 267.0,323.0 286.0,299.0 310.0,282.0"/></clipPath><g clip-path="url(#astc)" fill="none" stroke="#5a504a" stroke-linejoin="round"><polygon points="340.0,268.0 371.0,264.5 430.0,264.5 460.0,274.0 500.0,287.0 526.0,296.0 560.0,307.0 580.0,316.5 611.0,331.0 642.0,349.0 662.0,363.5 682.0,382.0 703.0,404.0 723.0,431.0 738.0,457.0 746.0,484.0 747.0,505.0 746.0,525.0 743.7,540.0 742.0,556.0 734.0,576.0 722.0,599.0 711.0,620.0 703.0,636.0 692.0,651.0 684.0,666.0 670.0,681.0 658.0,694.0 629.0,723.0 600.0,741.0 571.0,759.0 543.0,774.0 514.0,790.0 500.0,799.0 480.0,804.0 453.0,809.0 426.0,813.0 393.0,812.5 366.0,805.0 341.0,790.0 318.0,770.0 298.0,742.0 277.0,712.0 260.0,677.0 243.0,644.0 234.0,620.0 229.0,607.0 225.0,559.0 226.5,506.0 230.5,453.0 234.5,400.0 249.0,357.0 267.0,323.0 286.0,299.0 310.0,282.0" stroke-width="40" stroke-opacity="0.055"/><polygon points="340.0,268.0 371.0,264.5 430.0,264.5 460.0,274.0 500.0,287.0 526.0,296.0 560.0,307.0 580.0,316.5 611.0,331.0 642.0,349.0 662.0,363.5 682.0,382.0 703.0,404.0 723.0,431.0 738.0,457.0 746.0,484.0 747.0,505.0 746.0,525.0 743.7,540.0 742.0,556.0 734.0,576.0 722.0,599.0 711.0,620.0 703.0,636.0 692.0,651.0 684.0,666.0 670.0,681.0 658.0,694.0 629.0,723.0 600.0,741.0 571.0,759.0 543.0,774.0 514.0,790.0 500.0,799.0 480.0,804.0 453.0,809.0 426.0,813.0 393.0,812.5 366.0,805.0 341.0,790.0 318.0,770.0 298.0,742.0 277.0,712.0 260.0,677.0 243.0,644.0 234.0,620.0 229.0,607.0 225.0,559.0 226.5,506.0 230.5,453.0 234.5,400.0 249.0,357.0 267.0,323.0 286.0,299.0 310.0,282.0" stroke-width="32" stroke-opacity="0.055"/><polygon points="340.0,268.0 371.0,264.5 430.0,264.5 460.0,274.0 500.0,287.0 526.0,296.0 560.0,307.0 580.0,316.5 611.0,331.0 642.0,349.0 662.0,363.5 682.0,382.0 703.0,404.0 723.0,431.0 738.0,457.0 746.0,484.0 747.0,505.0 746.0,525.0 743.7,540.0 742.0,556.0 734.0,576.0 722.0,599.0 711.0,620.0 703.0,636.0 692.0,651.0 684.0,666.0 670.0,681.0 658.0,694.0 629.0,723.0 600.0,741.0 571.0,759.0 543.0,774.0 514.0,790.0 500.0,799.0 480.0,804.0 453.0,809.0 426.0,813.0 393.0,812.5 366.0,805.0 341.0,790.0 318.0,770.0 298.0,742.0 277.0,712.0 260.0,677.0 243.0,644.0 234.0,620.0 229.0,607.0 225.0,559.0 226.5,506.0 230.5,453.0 234.5,400.0 249.0,357.0 267.0,323.0 286.0,299.0 310.0,282.0" stroke-width="25" stroke-opacity="0.055"/><polygon points="340.0,268.0 371.0,264.5 430.0,264.5 460.0,274.0 500.0,287.0 526.0,296.0 560.0,307.0 580.0,316.5 611.0,331.0 642.0,349.0 662.0,363.5 682.0,382.0 703.0,404.0 723.0,431.0 738.0,457.0 746.0,484.0 747.0,505.0 746.0,525.0 743.7,540.0 742.0,556.0 734.0,576.0 722.0,599.0 711.0,620.0 703.0,636.0 692.0,651.0 684.0,666.0 670.0,681.0 658.0,694.0 629.0,723.0 600.0,741.0 571.0,759.0 543.0,774.0 514.0,790.0 500.0,799.0 480.0,804.0 453.0,809.0 426.0,813.0 393.0,812.5 366.0,805.0 341.0,790.0 318.0,770.0 298.0,742.0 277.0,712.0 260.0,677.0 243.0,644.0 234.0,620.0 229.0,607.0 225.0,559.0 226.5,506.0 230.5,453.0 234.5,400.0 249.0,357.0 267.0,323.0 286.0,299.0 310.0,282.0" stroke-width="19" stroke-opacity="0.055"/><polygon points="340.0,268.0 371.0,264.5 430.0,264.5 460.0,274.0 500.0,287.0 526.0,296.0 560.0,307.0 580.0,316.5 611.0,331.0 642.0,349.0 662.0,363.5 682.0,382.0 703.0,404.0 723.0,431.0 738.0,457.0 746.0,484.0 747.0,505.0 746.0,525.0 743.7,540.0 742.0,556.0 734.0,576.0 722.0,599.0 711.0,620.0 703.0,636.0 692.0,651.0 684.0,666.0 670.0,681.0 658.0,694.0 629.0,723.0 600.0,741.0 571.0,759.0 543.0,774.0 514.0,790.0 500.0,799.0 480.0,804.0 453.0,809.0 426.0,813.0 393.0,812.5 366.0,805.0 341.0,790.0 318.0,770.0 298.0,742.0 277.0,712.0 260.0,677.0 243.0,644.0 234.0,620.0 229.0,607.0 225.0,559.0 226.5,506.0 230.5,453.0 234.5,400.0 249.0,357.0 267.0,323.0 286.0,299.0 310.0,282.0" stroke-width="14" stroke-opacity="0.055"/><polygon points="340.0,268.0 371.0,264.5 430.0,264.5 460.0,274.0 500.0,287.0 526.0,296.0 560.0,307.0 580.0,316.5 611.0,331.0 642.0,349.0 662.0,363.5 682.0,382.0 703.0,404.0 723.0,431.0 738.0,457.0 746.0,484.0 747.0,505.0 746.0,525.0 743.7,540.0 742.0,556.0 734.0,576.0 722.0,599.0 711.0,620.0 703.0,636.0 692.0,651.0 684.0,666.0 670.0,681.0 658.0,694.0 629.0,723.0 600.0,741.0 571.0,759.0 543.0,774.0 514.0,790.0 500.0,799.0 480.0,804.0 453.0,809.0 426.0,813.0 393.0,812.5 366.0,805.0 341.0,790.0 318.0,770.0 298.0,742.0 277.0,712.0 260.0,677.0 243.0,644.0 234.0,620.0 229.0,607.0 225.0,559.0 226.5,506.0 230.5,453.0 234.5,400.0 249.0,357.0 267.0,323.0 286.0,299.0 310.0,282.0" stroke-width="10" stroke-opacity="0.055"/><polygon points="340.0,268.0 371.0,264.5 430.0,264.5 460.0,274.0 500.0,287.0 526.0,296.0 560.0,307.0 580.0,316.5 611.0,331.0 642.0,349.0 662.0,363.5 682.0,382.0 703.0,404.0 723.0,431.0 738.0,457.0 746.0,484.0 747.0,505.0 746.0,525.0 743.7,540.0 742.0,556.0 734.0,576.0 722.0,599.0 711.0,620.0 703.0,636.0 692.0,651.0 684.0,666.0 670.0,681.0 658.0,694.0 629.0,723.0 600.0,741.0 571.0,759.0 543.0,774.0 514.0,790.0 500.0,799.0 480.0,804.0 453.0,809.0 426.0,813.0 393.0,812.5 366.0,805.0 341.0,790.0 318.0,770.0 298.0,742.0 277.0,712.0 260.0,677.0 243.0,644.0 234.0,620.0 229.0,607.0 225.0,559.0 226.5,506.0 230.5,453.0 234.5,400.0 249.0,357.0 267.0,323.0 286.0,299.0 310.0,282.0" stroke-width="6" stroke-opacity="0.055"/><polygon points="340.0,268.0 371.0,264.5 430.0,264.5 460.0,274.0 500.0,287.0 526.0,296.0 560.0,307.0 580.0,316.5 611.0,331.0 642.0,349.0 662.0,363.5 682.0,382.0 703.0,404.0 723.0,431.0 738.0,457.0 746.0,484.0 747.0,505.0 746.0,525.0 743.7,540.0 742.0,556.0 734.0,576.0 722.0,599.0 711.0,620.0 703.0,636.0 692.0,651.0 684.0,666.0 670.0,681.0 658.0,694.0 629.0,723.0 600.0,741.0 571.0,759.0 543.0,774.0 514.0,790.0 500.0,799.0 480.0,804.0 453.0,809.0 426.0,813.0 393.0,812.5 366.0,805.0 341.0,790.0 318.0,770.0 298.0,742.0 277.0,712.0 260.0,677.0 243.0,644.0 234.0,620.0 229.0,607.0 225.0,559.0 226.5,506.0 230.5,453.0 234.5,400.0 249.0,357.0 267.0,323.0 286.0,299.0 310.0,282.0" stroke-width="3" stroke-opacity="0.055"/></g>
<ellipse cx="489.5" cy="537.8" rx="274" ry="216.5" transform="rotate(-13.1 489.5 537.8)" fill="none" stroke="#f02020" stroke-width="1.6" stroke-dasharray="4.5 14.3"/>
<ellipse cx="489" cy="537.5" rx="268.5" ry="211" transform="rotate(-13.1 489 537.5)" fill="none" stroke="#f8f010" stroke-width="1.2"/>
<line x1="227.5" y1="598.4" x2="754.5" y2="475.6" stroke="#f5a020" stroke-width="1.6" stroke-dasharray="6 6"/>
<line x1="439.7" y1="326.0" x2="536.8" y2="746.0" stroke="#f5a020" stroke-width="1.6" stroke-dasharray="6 6"/>
<line x1="12" y1="758" x2="229" y2="624.8" stroke="#ff0000" stroke-width="4"/>
<line x1="666.7" y1="356.3" x2="892" y2="218" stroke="#ff0000" stroke-width="4"/>
<line x1="194.7" y1="962.6" x2="565" y2="735.4" stroke="#0000ff" stroke-width="4"/>
<line x1="698.9" y1="653.2" x2="861.4" y2="553.5" stroke="#0000ff" stroke-width="4"/>
<line x1="229.0" y1="624.8" x2="241.3" y2="617.3" stroke="#00ffff" stroke-width="4"/><line x1="226.6" y1="621.0" x2="231.4" y2="628.7" stroke="#00ffff" stroke-width="2.5"/><line x1="238.9" y1="613.5" x2="243.7" y2="621.1" stroke="#00ffff" stroke-width="2.5"/>
<line x1="657.5" y1="361.9" x2="666.7" y2="356.3" stroke="#00ffff" stroke-width="4"/><line x1="655.1" y1="358.1" x2="659.9" y2="365.8" stroke="#00ffff" stroke-width="2.5"/><line x1="664.3" y1="352.4" x2="669.1" y2="360.1" stroke="#00ffff" stroke-width="2.5"/>
<line x1="683.5" y1="662.7" x2="698.9" y2="653.2" stroke="#00ffff" stroke-width="4"/><line x1="681.1" y1="658.8" x2="685.9" y2="666.5" stroke="#00ffff" stroke-width="2.5"/><line x1="696.5" y1="649.4" x2="701.3" y2="657.1" stroke="#00ffff" stroke-width="2.5"/>
<line x1="560.0" y1="738.5" x2="575.0" y2="729.2" stroke="#00ffff" stroke-width="4"/><line x1="557.6" y1="734.6" x2="562.4" y2="742.3" stroke="#00ffff" stroke-width="2.5"/><line x1="572.6" y1="725.4" x2="577.4" y2="733.1" stroke="#00ffff" stroke-width="2.5"/>
<line x1="194.7" y1="962.6" x2="560" y2="738.5" stroke="#0000ff" stroke-width="4" clip-path="url(#pc)"/>
<g font-family="Liberation Sans" font-size="11" fill="#fff">
<text x="236" y="634">2</text><text x="663" y="373">2</text><text x="692" y="672">3</text><text x="569" y="749">3</text><text x="473" y="622">1</text>
</g>
<circle cx="472" cy="608.5" r="2" fill="#ff66bb"/>
<circle cx="662" cy="492" r="1.8" fill="#ff66bb"/>
<circle cx="281" cy="725" r="1.8" fill="#ff66bb"/>
<circle cx="852.4" cy="375" r="2" fill="#ff66bb"/>
<circle cx="91" cy="841" r="1.8" fill="#ff66bb"/>
<circle cx="75" cy="152" r="1.5" fill="#e8e0c8"/>
<circle cx="455" cy="525" r="5.5" fill="none" stroke="#555" stroke-width="1.5"/>
<line x1="449" y1="525" x2="461" y2="525" stroke="#555" stroke-width="1.5"/><line x1="455" y1="519" x2="455" y2="531" stroke="#555" stroke-width="1.5"/>
<circle cx="488.6" cy="537.9" r="3.3" fill="none" stroke="#0000ff" stroke-width="2"/>
<path d="M875 292.3 H888 V759.2 H876" fill="none" stroke="#fff" stroke-width="1.3" stroke-dasharray="4.6 2.8"/>
<!-- scale bars -->
<path d="M190 919 H719" stroke="#000" stroke-width="9"/>
<g stroke="#c8c8c8" stroke-width="2" fill="none">
<path d="M190 932 V919 H719 V906"/><path d="M193 906 V919"/><path d="M720.5 919 V931"/>
</g>
<path d="M314 935 V943 H596 V932" fill="none" stroke="#e0e0e0" stroke-width="1.3" stroke-dasharray="6 3.2"/>
</g>
<g fill="#fff" font-family="Liberation Sans" font-weight="bold">
<text xml:space="preserve" x="16" y="100" font-size="17" textLength="502" lengthAdjust="spacingAndGlyphs">(504) Cora  2026 Feb 19  38.1 ±0.1 x 30.0 km, PA 103.1° ±0.7°</text>
<text x="16" y="120" font-size="17" textLength="370" lengthAdjust="spacingAndGlyphs" xml:space="preserve">Geocentric  X  -5141.5 ±0.0  Y 3269.7 ±0.0 km</text>
<text x="28" y="172" font-size="16.5" textLength="100" lengthAdjust="spacingAndGlyphs">Star 0.1mas</text>
<text x="448" y="125" font-size="28">N</text>
<text x="23.5" y="543" font-size="29" font-weight="normal" stroke="#fff" stroke-width="0.6">E</text>
</g>
<g fill="#fff" font-family="Liberation Serif">
<g font-weight="bold" fill="#e4e0dc" style="filter:blur(0.25px)">
<text x="717" y="203.5" font-size="14.5" textLength="60.6" lengthAdjust="spacingAndGlyphs">Sky Plane</text>
<text x="719.5" y="221" font-size="14" textLength="63" lengthAdjust="spacingAndGlyphs">(504) Cora</text>
<text x="693.2" y="238.3" font-size="14" textLength="93.3" lengthAdjust="spacingAndGlyphs">DAMIT #12775</text></g>
<text transform="translate(868 504) rotate(90)" font-size="19" textLength="54" lengthAdjust="spacingAndGlyphs">20 mas</text>
<text x="45" y="920" font-size="19">Disappear</text>
<text x="45" y="938" font-size="19">Reappear</text>
<text x="21" y="958" font-size="12" textLength="92" lengthAdjust="spacingAndGlyphs">Occult 4.2026.3.23</text>
<text x="151" y="958" font-size="12" textLength="70" lengthAdjust="spacingAndGlyphs">Phase offset 0°</text>
<text x="456" y="916" font-size="14" textLength="170" lengthAdjust="spacingAndGlyphs">(Volume) Mean dia = 37.2 km</text>
<text x="286" y="932" font-size="14" textLength="167" lengthAdjust="spacingAndGlyphs">(Surface) Mean dia = 37.6 km</text>
<text x="431" y="960" font-size="15" font-style="italic">20.0 km</text>
<text x="765" y="960" font-size="15" textLength="106" lengthAdjust="spacingAndGlyphs">Plot width: 63 km</text>
</g>
<circle cx="31" cy="914" r="6.2" fill="#ff0000"/>
<circle cx="31" cy="931.5" r="6.2" fill="#228b22"/>
</svg><style>
.btn{position:absolute;background:#fff;border:1px solid #cfcfcf;border-radius:4px;box-shadow:0 1px 0 #dcdcdc}
.lbl{position:absolute;white-space:nowrap;font-size:13px;line-height:15px;color:#111}
.nud{position:absolute;width:73px;height:24px;background:#fff;border:1px solid #8c8c8c;box-shadow:inset 0 0 0 1px #d9d9d9}
.nud span{position:absolute;left:3px;top:3px;font-size:13px;line-height:15px}
.nud i{position:absolute;right:3px;width:16px;height:10px;background:#f4f4f4;border-bottom:1px solid #d0d0d0}
.nud i.u{top:2px}.nud i.d{top:12px}
.nud i:after{content:"";position:absolute;left:4px;width:0;height:0;border-left:4px solid transparent;border-right:4px solid transparent}
.nud i.u:after{top:2px;border-bottom:5px solid #111}
.nud i.d:after{top:3px;border-top:5px solid #111}
.cb{position:absolute;width:16px;height:16px;border:1px solid #333;border-radius:3px;background:#fff}
.cbc{position:absolute;width:16px;height:16px;border-radius:3px;background:#005fb8}
.cbc:after{content:"";position:absolute;left:4px;top:3px;width:7px;height:4px;border-left:1.5px solid #fff;border-bottom:1.5px solid #fff;transform:rotate(-45deg)}
.sunk{position:absolute;border-top:2px solid #6d6d6d;border-left:2px solid #6d6d6d;border-bottom:1px solid #fff;border-right:1px solid #fff}
.dk{color:#7a0a14;font-weight:bold}
.rad{position:absolute;width:16px;height:16px;border-radius:50%;border:1px solid #555;background:#fdfdfd}
.radc{position:absolute;width:16px;height:16px;border-radius:50%;background:#005fb8}
.radc:after{content:"";position:absolute;left:5px;top:5px;width:6px;height:6px;border-radius:50%;background:#fff}
.tb{position:absolute;width:18px;height:22px;background:#f0f0f0;border:2.5px solid #fff;border-radius:5px;font-size:14px;line-height:17px;text-align:center;color:#a0a0a0}
.gb{position:absolute;background:#efefef;border-bottom:2px solid #a9a9a9;border-right:1px solid #d8d8d8;border-top:1px solid #f8f8f8}
.trk{position:absolute;height:4px;background:#e7e7e7;border:1px solid #d6d6d6}
.thumb{position:absolute;width:10px;height:14px;background:#0067c0;border-radius:2px 2px 5px 5px}
</style>
<!-- toolbar -->
<div class="a" style="left:218.5px;top:45.3px;width:17.4px;height:17.4px;border-radius:50%;background:#c8d8f0;box-shadow:0 0 0 1px #8aa8d8"></div>
<div class="a" style="left:220.5px;top:47.3px;width:13.4px;height:13.4px;border-radius:50%;background:radial-gradient(circle at 40% 30%,#5a9aff,#1550d8 60%,#10389a)"></div>
<div class="a" style="left:218.5px;top:46px;width:17.4px;height:17px;font:bold 12px/17px 'Liberation Sans';color:#fff;text-align:center">?</div>
<div class="btn" style="left:529px;top:41px;width:104px;height:25px"></div>
<div class="a" style="left:537px;top:46px;font-size:12px;line-height:14px;color:#222">Set 'Miss' Times</div>
<div class="btn" style="left:645px;top:41px;width:73px;height:27px"></div>
<svg width="16" height="10" style="position:absolute;left:652px;top:50px"><line x1="0.5" y1="5" x2="11" y2="5" stroke="#000" stroke-width="2"/><path d="M9 1.5 L14.5 5 L9 8.5Z" fill="#000"/></svg><div class="a" style="left:668px;top:46px;font-size:14.5px;line-height:17px;font-weight:bold;color:#000;letter-spacing:-0.3px">Editor</div>
<div class="a" style="left:728px;top:48px;width:111px;height:16px;background:#f0f0f0"></div>
<div class="a" style="left:732px;top:49px;font-size:13px;line-height:15px;color:#222">{Observer &amp; time}</div>

<!-- find best fit group -->
<div class="a" style="left:915px;top:80px;width:430px;height:884px;border:1px solid #dcdcdc"></div>
<div class="a" style="left:923px;top:73px;width:72px;height:16px;background:#f0f0f0"></div>
<div class="lbl" style="left:926px;top:74px">Find best fit</div>
<div class="a" style="left:927px;top:95px;width:40px;height:40px;background:#c0c0c0;border-top:3px solid #fdfdfd;border-left:3px solid #fdfdfd;border-right:3px solid #7c7c7c;border-bottom:3px solid #7c7c7c;box-shadow:0 0 0 0.5px #9a9a9a"></div>
<svg width="40" height="40" style="position:absolute;left:927px;top:95px"><g fill="#333"><circle cx="6.5" cy="10.5" r="0.7"/><circle cx="6.5" cy="13.5" r="0.7"/><circle cx="6.5" cy="16.5" r="0.7"/><circle cx="6.5" cy="19.5" r="0.7"/><circle cx="6.5" cy="22.5" r="0.7"/><circle cx="6.5" cy="25.5" r="0.7"/><circle cx="6.5" cy="28.5" r="0.7"/><circle cx="6.5" cy="31.5" r="0.7"/><circle cx="11.5" cy="31.5" r="0.7"/><circle cx="16.5" cy="31.5" r="0.7"/><circle cx="21.5" cy="31.5" r="0.7"/><circle cx="26.5" cy="31.5" r="0.7"/><circle cx="31.5" cy="31.5" r="0.7"/></g><polyline points="11.8,25.5 17.1,20 22.4,25.5 27.1,20 32.4,15" fill="none" stroke="#111" stroke-width="1"/><g fill="#000"><circle cx="11.8" cy="25.5" r="1.5"/><circle cx="17.1" cy="20" r="1.3"/><circle cx="22.4" cy="25.5" r="1.5"/><circle cx="27.1" cy="20" r="1.3"/><circle cx="32.4" cy="15" r="1.5"/></g></svg>

<div class="lbl" style="left:992px;top:93px">Center X</div>
<div class="lbl" style="left:992px;top:120px">Center Y</div>
<div class="lbl" style="left:957px;top:154px">Major axis (km)</div>
<div class="lbl" style="left:957px;top:181px">Minor axis (km)</div>
<div class="lbl" style="left:980px;top:208px">Orientation</div>
<div class="nud" style="left:1051px;top:87px"><span>1.8</span><i class="u"></i><i class="d"></i></div>
<div class="nud" style="left:1051px;top:114px"><span>0.7</span><i class="u"></i><i class="d"></i></div>
<div class="nud" style="left:1051px;top:148px"><span>38.1</span><i class="u"></i><i class="d"></i></div>
<div class="nud" style="left:1051px;top:176px"><span>30.0</span><i class="u"></i><i class="d"></i></div>
<div class="nud" style="left:1051px;top:203px"><span>103.1</span><i class="u"></i><i class="d"></i></div>
<div class="cbc" style="left:1139px;top:90px"></div>
<div class="cbc" style="left:1139px;top:118px"></div>
<div class="cbc" style="left:1139px;top:151px"></div>
<div class="cb" style="left:1139px;top:179px"></div>
<div class="cbc" style="left:1139px;top:206px"></div>
<div class="lbl" style="left:1163px;top:92px">0.0</div>
<div class="lbl" style="left:1163px;top:119px">0.0</div>
<div class="lbl" style="left:1163px;top:153px">0.0</div>
<div class="lbl" style="left:1163px;top:181px">0.0</div>
<div class="lbl" style="left:1163px;top:208px">0.0</div>
<div class="lbl" style="left:1216px;top:93px">Mass X</div>
<div class="lbl" style="left:1216px;top:120px">Mass Y</div>
<div class="nud" style="left:1266px;top:87px"><span>0.0</span><i class="u"></i><i class="d"></i></div>
<div class="nud" style="left:1266px;top:114px"><span>0.0</span><i class="u"></i><i class="d"></i></div>
<div class="a" style="left:1257px;top:141px;font-size:9px;line-height:10px;color:#b4b4b4">Shape model</div>
<div class="a" style="left:1321px;top:139px;width:15px;height:15px;border:1px solid #d4d4d4;border-radius:3px;background:#f8f8f8"></div>
<div class="lbl" style="left:1234px;top:158px;color:#2e8b2e">dia = 33.8 km</div>
<div class="lbl" style="left:1210px;top:176px;color:#3a2ef0;letter-spacing:0.2px">a/b: 1.27, dMag: 0.26</div>
<div class="lbl" style="left:1216px;top:213px">Motion: 15.83 km/s</div>
<div class="cb" style="left:931px;top:240px"></div>
<div class="lbl" style="left:954px;top:241px">Circular</div>
<div class="cb" style="left:1014px;top:240px"></div>
<div class="lbl" style="left:1038px;top:234px;font-size:12.5px;line-height:15.5px">Use assumed<br>dia (30.2 km)</div>
<div class="cbc" style="left:1142px;top:241px"></div>
<div class="lbl" style="left:1165px;top:241px;font-size:13.3px">Include Miss events</div>

<!-- double stars -->
<div class="sunk" style="left:929px;top:274px;width:403px;height:25px;background:#f0f0f0"></div>
<div class="lbl" style="left:940px;top:278px;font-size:14.5px;line-height:17px;color:#a8a8a8;font-weight:bold">Double stars - show</div>
<div class="rad" style="left:1097px;top:280px;border:3.5px solid #c4c4c4;background:#f4f4f4"></div>
<div class="lbl" style="left:1119px;top:282px;font-size:11.5px;line-height:13px;color:#a8a8a8">Both</div>
<div class="rad" style="left:1162px;top:279px;border-color:#c8c8c8;background:#f0f0f0"></div>
<div class="lbl" style="left:1184px;top:282px;font-size:11.5px;line-height:13px;color:#a8a8a8">Primary</div>
<div class="rad" style="left:1243px;top:279px;border-color:#c8c8c8;background:#f0f0f0"></div>
<div class="lbl" style="left:1265px;top:282px;font-size:11.5px;line-height:13px;color:#a8a8a8">Secondary</div>

<div class="lbl" style="left:929px;top:314px;font-size:16.5px;line-height:18px;font-weight:bold;color:#0f7a1a">Quality of the fit</div>
<div class="a" style="left:1062px;top:307px;width:271px;height:26px;background:#fff;border:1px solid #7a7a7a;border-radius:3px"></div>
<div class="lbl" style="left:1066px;top:312px;font-size:13px">Astrometry only. No reliable size</div>
<svg width="12" height="8" style="position:absolute;left:1315px;top:316px"><polyline points="1,1 6,6 11,1" fill="none" stroke="#555" stroke-width="1.2"/></svg>
<div class="lbl dk" style="left:962px;top:340px;font-size:15px;line-height:17px">Review flags</div>
<div class="sunk" style="left:1062px;top:335px;width:270px;height:24px;background:#e0ffff"></div>
<div class="cb" style="left:1068px;top:340px"></div>
<div class="lbl" style="left:1092px;top:339px;font-size:15px;line-height:17px">0 items are tagged for review</div>

<!-- PLOT panel -->
<div class="sunk" style="left:918px;top:363px;width:423px;height:101px;background:#f0ffff"></div>
<div class="lbl dk" style="left:926px;top:382px;font-size:14.5px;line-height:15.7px;width:14px;text-align:center">P<br>L<br>O<br>T</div>
<div class="lbl dk" style="left:953px;top:377px;font-size:15px;line-height:17px">Scale</div>
<div class="a" style="left:1001px;top:372px;width:337px;height:24px;background:#fff8d0"></div>
<div class="trk" style="left:1007px;top:380px;width:323px"></div>
<div class="thumb" style="left:1157px;top:375px"></div>
<svg width="337" height="6" style="position:absolute;left:1001px;top:389px" id="tk1"></svg>
<div class="lbl dk" style="left:953px;top:410px;font-size:15px;line-height:17px">Size</div>
<div class="sunk" style="left:991px;top:405px;width:203px;height:27px;background:#f0fff0"></div>
<div class="radc" style="left:1003px;top:411px"></div>
<div class="lbl dk" style="left:1026px;top:410px;font-size:14.5px;line-height:17px">normal</div>
<div class="rad" style="left:1083px;top:411px"></div>
<div class="lbl dk" style="left:1106px;top:410px;font-size:14.5px;line-height:17px">x 2</div>
<div class="rad" style="left:1138px;top:411px"></div>
<div class="lbl dk" style="left:1161px;top:410px;font-size:14.5px;line-height:17px">x 5</div>
<div class="lbl" style="left:1222px;top:411px;font-size:14.5px;line-height:17px;font-weight:bold;color:#80107a">Form opacity</div>
<div class="lbl dk" style="left:954px;top:442px;font-size:15px;line-height:17px">Scroll range x1.25</div>
<div class="cb" style="left:1093px;top:442px"></div>
<div class="a" style="left:1195px;top:433px;width:144px;height:26px;background:#fff8d0"></div>
<div class="trk" style="left:1203px;top:440px;width:127px"></div>
<div class="thumb" style="left:1320px;top:435px;height:15px"></div>

<!-- RMS + list -->
<div class="lbl" style="left:935px;top:479px;font-size:13px;letter-spacing:0.1px">RMS fit 0.0 ±0.0 km</div>
<div class="a" style="left:926px;top:503px;width:409px;height:441px;background:#fff;border-top:2px solid #8a8a8a;border-left:2px solid #8a8a8a;border-right:1px solid #e0e0e0;border-bottom:1px solid #e0e0e0"></div>
<svg width="100" height="50" style="position:absolute;left:926px;top:503px"><g fill="#ff88cc"><circle cx="10.7" cy="12" r="2"/><circle cx="29.6" cy="12" r="2"/><circle cx="48.5" cy="12" r="2"/><circle cx="67.4" cy="12" r="2"/><circle cx="85.8" cy="12" r="2"/></g><line x1="10" y1="26.3" x2="88" y2="26.3" stroke="#ff0000" stroke-width="4.5" stroke-linecap="round"/><line x1="10" y1="41" x2="88" y2="41" stroke="#0000ff" stroke-width="4.5" stroke-linecap="round"/></svg>
<div class="a" style="left:1045.5px;top:509.5px;font-family:'Liberation Mono',monospace;font-size:17.1px;line-height:14.8px;color:#2a2a2a;white-space:pre">1(P) Predicted
2    B Whitehurst, near Tuls
3    D Sailing, near Broken</div>
<!-- slider ticks -->
<svg width="340" height="8" style="position:absolute;left:1001px;top:389px"><g stroke="#8a8a8a" stroke-width="1">
<line x1="11" y1="1" x2="11" y2="6"/><line x1="27" y1="2" x2="27" y2="5"/><line x1="42" y1="2" x2="42" y2="5"/><line x1="58" y1="2" x2="58" y2="5"/><line x1="74" y1="2" x2="74" y2="5"/><line x1="90" y1="2" x2="90" y2="5"/><line x1="106" y1="2" x2="106" y2="5"/><line x1="121" y1="2" x2="121" y2="5"/><line x1="137" y1="2" x2="137" y2="5"/><line x1="153" y1="2" x2="153" y2="5"/><line x1="169" y1="2" x2="169" y2="5"/><line x1="185" y1="2" x2="185" y2="5"/><line x1="200" y1="2" x2="200" y2="5"/><line x1="216" y1="2" x2="216" y2="5"/><line x1="232" y1="2" x2="232" y2="5"/><line x1="248" y1="2" x2="248" y2="5"/><line x1="264" y1="2" x2="264" y2="5"/><line x1="279" y1="2" x2="279" y2="5"/><line x1="295" y1="2" x2="295" y2="5"/><line x1="311" y1="2" x2="311" y2="5"/><line x1="327" y1="1" x2="327" y2="6"/></g></svg>
<svg width="144" height="10" style="position:absolute;left:1195px;top:451px"><g stroke="#8a8a8a" stroke-width="1">
<line x1="13" y1="1" x2="13" y2="6"/><line x1="37" y1="2" x2="37" y2="5"/><line x1="60" y1="2" x2="60" y2="5"/><line x1="84" y1="2" x2="84" y2="5"/><line x1="107" y1="2" x2="107" y2="5"/><line x1="131" y1="1" x2="131" y2="6"/></g></svg>

<!-- DAMIT panel -->
<div class="a" style="left:779px;top:771px;width:563px;height:171px;background:#b0c4de;border:1px solid #5a5a5a;border-top-color:#6a6a6a"></div>
<div class="lbl" style="left:782px;top:779px;font-size:15px;line-height:17px;font-weight:bold;color:#2a3f5f">DAMIT</div>
<div class="tb" style="left:838px;top:775px;background:#66cdaa;color:#222">1</div>
<div class="tb" style="left:860px;top:775px;background:#00ff00;color:#000;font-weight:bold;font-size:15px">2</div>
<div class="tb" style="left:882px;top:775px">3</div>
<div class="tb" style="left:905px;top:775px">4</div>
<div class="tb" style="left:927px;top:775px">5</div>
<div class="tb" style="left:950px;top:775px">6</div>
<div class="tb" style="left:975px;top:775px;width:89px;background:#b0e0e6;color:#111;font-size:13.5px">Light curves</div>
<div class="lbl" style="left:1072px;top:779px;font-size:15px;line-height:17px;font-weight:bold;color:#2a3f5f">ISAM</div>
<div class="tb" style="left:1117px;top:775px;width:19px">1</div>
<div class="tb" style="left:1147px;top:775px;width:19px">2</div>
<div class="tb" style="left:1177px;top:775px;width:19px">3</div>
<div class="tb" style="left:1207px;top:775px;width:19px">4</div>
<div class="tb" style="left:1237px;top:775px;width:19px">5</div>
<div class="tb" style="left:1267px;top:775px;width:19px">6</div>
<div class="a" style="left:1297px;top:775px;width:20px;height:21px;background:#fff;border-radius:3px"></div>
<div class="a" style="left:1299px;top:777px;width:16px;height:17px;background:#3737c8;color:#ffff00;font:bold 15px/17px 'Liberation Sans';text-align:center">?</div>
<div class="a" style="left:1317px;top:775px;width:20px;height:21px;background:#fff;border-radius:3px"></div>
<div class="a" style="left:1319px;top:777px;width:16px;height:17px;background:#dc143c;color:#fff;font:bold 14px/17px 'Liberation Sans';text-align:center">X</div>

<div class="lbl" style="left:789px;top:801px;color:#3a4a68">Source</div>
<div class="lbl" style="left:863px;top:801px;color:#3a4a68">ID</div>
<div class="lbl" style="left:905px;top:801px;color:#3a4a68">Surf/Vol</div>
<div class="gb" style="left:785px;top:818px;width:49px;height:22px"></div>
<div class="gb" style="left:837px;top:818px;width:66px;height:22px"></div>
<div class="gb" style="left:906px;top:818px;width:47px;height:22px"></div>
<div class="lbl" style="left:789px;top:822px;color:#222">DAMIT</div>
<div class="lbl" style="left:841px;top:822px;color:#222">12775</div>
<div class="lbl" style="left:910px;top:822px;color:#222">1.012</div>
<div class="a" style="left:783px;top:842px;width:42px;height:26px;background:#ffff00;border:1px solid #6a6a3a"></div>
<div class="lbl" style="left:792px;top:847px;font-size:14px;line-height:16px;font-weight:bold">Dia</div>
<div class="lbl" style="left:830px;top:846px;font-style:italic;color:#4a5a78;font-size:12.5px">Values in memory =&gt;</div>

<div class="sunk" style="left:956px;top:800px;width:379px;height:62px;background:#fffacd;border-right:none;border-bottom:none"></div>
<div class="lbl" style="left:985px;top:802px;color:#222">Fit quality</div>
<div class="lbl" style="left:1083px;top:802px;color:#222;letter-spacing:-0.4px">Ph Comm</div>
<div class="lbl" style="left:1147px;top:802px;color:#222;letter-spacing:-0.3px">Minimum dia</div>
<div class="lbl" style="left:1242px;top:802px;color:#222;letter-spacing:-0.3px">Maximum dia</div>
<div class="a" style="left:959px;top:818px;width:121px;height:25px;background:#fff;border:1px solid #7a7a7a;border-radius:2px"></div>
<div class="lbl" style="left:962px;top:823px;font-size:13px">Dia, but no fit</div>
<svg width="12" height="8" style="position:absolute;left:1063px;top:827px"><polyline points="1,1 6,6 11,1" fill="none" stroke="#555" stroke-width="1.2"/></svg>
<div class="gb" style="left:1086px;top:819px;width:48px;height:23px"></div>
<div class="lbl" style="left:1089px;top:823px;color:#333">0°</div>
<div class="gb" style="left:1144px;top:819px;width:47px;height:23px"></div>
<div class="lbl" style="left:1146px;top:822px;color:#222">37</div>
<div class="a" style="left:1194px;top:819px;width:37px;height:28px;background:#7fff00;border:3px solid #fff;border-radius:4px"></div>
<div class="lbl" style="left:1200px;top:825px;font-size:14px;color:#111">Set</div>
<div class="gb" style="left:1241px;top:819px;width:47px;height:23px"></div>
<div class="lbl" style="left:1243px;top:822px;color:#222">39</div>
<div class="a" style="left:1291px;top:819px;width:37px;height:28px;background:#7fff00;border:3px solid #fff;border-radius:4px"></div>
<div class="lbl" style="left:1297px;top:825px;font-size:14px;color:#111">Set</div>
<div class="lbl" style="left:962px;top:845px;color:#80108a">Dia, but no fit</div>
<div class="lbl" style="left:1088px;top:845px;color:#80108a">0°</div>
<div class="lbl" style="left:1145px;top:845px;color:#6a2a8a">37</div>
<div class="lbl" style="left:1244px;top:845px;color:#6a2a8a">39</div>

<div class="lbl" style="left:844px;top:865px;font-size:13.5px;font-weight:bold;color:#111;letter-spacing:0.62px">Chords have major differences from SM, but an approx dia possible</div>
<div class="lbl" style="left:789px;top:885px;color:#3a4a68">Version info</div>
<div class="gb" style="left:865px;top:883px;width:336px;height:22px"></div>
<div class="lbl" style="left:868px;top:886px;color:#222">2022-11-29, Q=1</div>
<div class="lbl" style="left:789px;top:912px;color:#3a4a68">Image scale</div>
<div class="a" style="left:865px;top:908px;width:337px;height:28px;background:#fff8d0"></div>
<svg width="337" height="10" style="position:absolute;left:865px;top:912px" id="tk3"><g stroke="#999" stroke-width="1"><line x1="9.5" y1="3" x2="9.5" y2="7"/><line x1="17.5" y1="3" x2="17.5" y2="7"/><line x1="25.5" y1="3" x2="25.5" y2="7"/><line x1="33.5" y1="3" x2="33.5" y2="7"/><line x1="41.5" y1="3" x2="41.5" y2="7"/><line x1="49.5" y1="3" x2="49.5" y2="7"/><line x1="57.5" y1="3" x2="57.5" y2="7"/><line x1="65.5" y1="3" x2="65.5" y2="7"/><line x1="73.5" y1="3" x2="73.5" y2="7"/><line x1="81.5" y1="3" x2="81.5" y2="7"/><line x1="89.5" y1="3" x2="89.5" y2="7"/><line x1="97.5" y1="3" x2="97.5" y2="7"/><line x1="105.5" y1="3" x2="105.5" y2="7"/><line x1="113.5" y1="3" x2="113.5" y2="7"/><line x1="121.5" y1="3" x2="121.5" y2="7"/><line x1="129.5" y1="3" x2="129.5" y2="7"/><line x1="137.5" y1="3" x2="137.5" y2="7"/><line x1="145.5" y1="3" x2="145.5" y2="7"/><line x1="153.5" y1="3" x2="153.5" y2="7"/><line x1="161.5" y1="3" x2="161.5" y2="7"/><line x1="169.5" y1="3" x2="169.5" y2="7"/><line x1="177.5" y1="3" x2="177.5" y2="7"/><line x1="185.5" y1="3" x2="185.5" y2="7"/><line x1="193.5" y1="3" x2="193.5" y2="7"/><line x1="201.5" y1="3" x2="201.5" y2="7"/><line x1="209.5" y1="3" x2="209.5" y2="7"/><line x1="217.5" y1="3" x2="217.5" y2="7"/><line x1="225.5" y1="3" x2="225.5" y2="7"/><line x1="233.5" y1="3" x2="233.5" y2="7"/><line x1="241.5" y1="3" x2="241.5" y2="7"/><line x1="249.5" y1="3" x2="249.5" y2="7"/><line x1="257.5" y1="3" x2="257.5" y2="7"/><line x1="265.5" y1="3" x2="265.5" y2="7"/><line x1="273.5" y1="3" x2="273.5" y2="7"/><line x1="281.5" y1="3" x2="281.5" y2="7"/><line x1="289.5" y1="3" x2="289.5" y2="7"/><line x1="297.5" y1="3" x2="297.5" y2="7"/><line x1="305.5" y1="3" x2="305.5" y2="7"/><line x1="313.5" y1="3" x2="313.5" y2="7"/><line x1="321.5" y1="3" x2="321.5" y2="7"/><line x1="329.5" y1="3" x2="329.5" y2="7"/></g></svg>
<div class="trk" style="left:872px;top:928px;width:320px"></div>
<div class="thumb" style="left:1033px;top:922px;height:13px;border-radius:5px 5px 1px 1px"></div>
<div class="a" style="left:1214px;top:884px;width:121px;height:53px;background:#ffc0cb;border:3px solid #fff;border-radius:5px"></div>
<div class="a" style="left:1214px;top:895px;width:121px;text-align:center;font-size:15.5px;line-height:16px;font-weight:bold;color:#a0102a">Save/update<br>model 12775</div>

<div class="a" style="left:902px;top:522px;width:1px;height:20px;background:#707070"></div>
<div class="a" style="left:443px;top:972px;width:22px;height:1px;background:#a0a0a0"></div>
</body></html>
